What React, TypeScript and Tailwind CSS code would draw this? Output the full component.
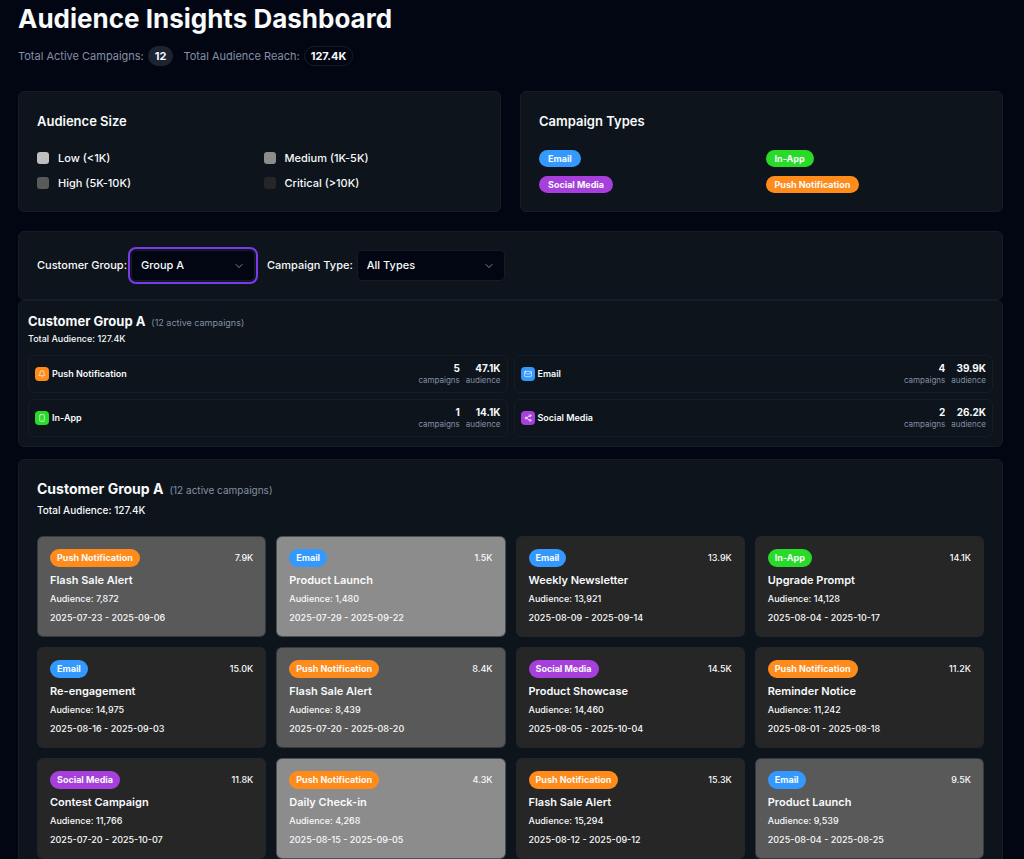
import { useState } from "react";
import { Bell, ChevronDown, Mail, Share2, Smartphone } from "lucide-react";
import type { LucideIcon } from "lucide-react";

type CampaignType = "Push Notification" | "Email" | "In-App" | "Social Media";

type Campaign = {
  type: CampaignType;
  name: string;
  audience: number;
  start: string;
  end: string;
};

const typeColors: Record<CampaignType, string> = {
  "Push Notification": "bg-[#ff8c1a]",
  Email: "bg-[#3399ff]",
  "In-App": "bg-[#29db29]",
  "Social Media": "bg-[#a63fdb]",
};

const typeIcons: Record<CampaignType, LucideIcon> = {
  "Push Notification": Bell,
  Email: Mail,
  "In-App": Smartphone,
  "Social Media": Share2,
};

const legendTypes: CampaignType[] = ["Email", "In-App", "Social Media", "Push Notification"];
const summaryTypes: CampaignType[] = ["Push Notification", "Email", "In-App", "Social Media"];

const sizes = [
  { label: "Low (<1K)", color: "bg-[#bfbfbf]" },
  { label: "Medium (1K-5K)", color: "bg-[#8c8c8c]" },
  { label: "High (5K-10K)", color: "bg-[#595959]" },
  { label: "Critical (>10K)", color: "bg-[#262626]" },
];

const campaigns: Campaign[] = [
  { type: "Push Notification", name: "Flash Sale Alert", audience: 7872, start: "2025-07-23", end: "2025-09-06" },
  { type: "Email", name: "Product Launch", audience: 1480, start: "2025-07-29", end: "2025-09-22" },
  { type: "Email", name: "Weekly Newsletter", audience: 13921, start: "2025-08-09", end: "2025-09-14" },
  { type: "In-App", name: "Upgrade Prompt", audience: 14128, start: "2025-08-04", end: "2025-10-17" },
  { type: "Email", name: "Re-engagement", audience: 14975, start: "2025-08-16", end: "2025-09-03" },
  { type: "Push Notification", name: "Flash Sale Alert", audience: 8439, start: "2025-07-20", end: "2025-08-20" },
  { type: "Social Media", name: "Product Showcase", audience: 14460, start: "2025-08-05", end: "2025-10-04" },
  { type: "Push Notification", name: "Reminder Notice", audience: 11242, start: "2025-08-01", end: "2025-08-18" },
  { type: "Social Media", name: "Contest Campaign", audience: 11766, start: "2025-07-20", end: "2025-10-07" },
  { type: "Push Notification", name: "Daily Check-in", audience: 4268, start: "2025-08-15", end: "2025-09-05" },
  { type: "Push Notification", name: "Flash Sale Alert", audience: 15294, start: "2025-08-12", end: "2025-09-12" },
  { type: "Email", name: "Product Launch", audience: 9539, start: "2025-08-04", end: "2025-08-25" },
];

const formatK = (n: number) => `${(n / 1000).toFixed(1)}K`;

const sumAudience = (list: Campaign[]) => list.reduce((sum, c) => sum + c.audience, 0);

const sizeColor = (audience: number) => {
  if (audience < 1000) return "bg-[#bfbfbf]";
  if (audience < 5000) return "bg-[#8c8c8c]";
  if (audience < 10000) return "bg-[#595959]";
  return "bg-[#262626]";
};

type FilterProps = {
  id: string;
  label: string;
  value: string;
  options: string[];
  className: string;
  onChange: (value: string) => void;
};

const Filter = ({ id, label, value, options, className, onChange }: FilterProps) => (
  <div className="flex items-center gap-1">
    <label htmlFor={id} className="text-[11px] font-medium">
      {label}
    </label>
    <div className="relative">
      <select
        id={id}
        value={value}
        onChange={(e) => onChange(e.target.value)}
        className={`h-[31px] appearance-none rounded-[5px] border border-[#151c28] bg-[#020612] px-[9px] text-[11px] font-medium ${className}`}
      >
        {options.map((option) => (
          <option key={option}>{option}</option>
        ))}
      </select>
      <ChevronDown className="pointer-events-none absolute top-[10px] right-[10px] size-3 text-[#7f8692]" />
    </div>
  </div>
);

const SummaryTile = ({ type }: { type: CampaignType }) => {
  const Icon = typeIcons[type];
  const list = campaigns.filter((c) => c.type === type);

  return (
    <div className="flex h-[38px] items-center justify-between rounded-md border border-[#151c28] px-[6px]">
      <div className="flex items-center gap-[3px]">
        <span className={`flex size-[14px] items-center justify-center rounded-[4px] ${typeColors[type]}`}>
          <Icon className="size-2 text-white" />
        </span>
        <span className="text-[9px] font-semibold">{type}</span>
      </div>
      <div className="flex gap-[6px] text-right">
        <div>
          <div className="text-[10px] leading-3 font-bold">{list.length}</div>
          <div className="text-[8px] leading-3 text-[#8390a5]">campaigns</div>
        </div>
        <div>
          <div className="text-[10px] leading-3 font-bold">{formatK(sumAudience(list))}</div>
          <div className="text-[8px] leading-3 text-[#8390a5]">audience</div>
        </div>
      </div>
    </div>
  );
};

const CampaignCard = ({ campaign }: { campaign: Campaign }) => (
  <article className={`rounded-md border border-[#1e2630]/60 p-3 pb-[10px] ${sizeColor(campaign.audience)}`}>
    <div className="flex items-center justify-between">
      <span className={`rounded-full px-[7px] text-[9px] leading-[18px] font-bold ${typeColors[campaign.type]}`}>
        {campaign.type}
      </span>
      <span className="text-[9px] leading-[18px] font-medium">{formatK(campaign.audience)}</span>
    </div>
    <h3 className="mt-[5px] text-[11px] leading-4 font-semibold">{campaign.name}</h3>
    <p className="mt-[3px] text-[9px] leading-4 font-medium">
      Audience: {campaign.audience.toLocaleString("en-US")}
    </p>
    <p className="mt-[3px] text-[9px] leading-4 font-medium">
      {campaign.start} - {campaign.end}
    </p>
  </article>
);

export default function App() {
  const [group, setGroup] = useState("Group A");
  const [type, setType] = useState("All Types");

  const total = formatK(sumAudience(campaigns));
  const visible = campaigns.filter((c) => type === "All Types" || c.type === type);

  return (
    <main className="min-h-screen bg-[#020612] pr-[21px] pb-5 pl-[18px] font-['Inter',sans-serif] text-[#f8fafc]">
      {/* Header */}
      <header>
        <h1 className="text-[26px] leading-[38px] font-bold">Audience Insights Dashboard</h1>
        <div className="mt-2 flex items-center gap-[10px] text-[11px] text-[#8390a5]">
          <div className="flex items-center gap-1">
            Total Active Campaigns:
            <span className="rounded-full bg-[#1c2431] px-[7px] leading-5 font-bold text-[#f8fafc]">
              {campaigns.length}
            </span>
          </div>
          <div className="flex items-center gap-1">
            Total Audience Reach:
            <span className="rounded-full border border-[#151c28] px-[6px] leading-[18px] font-bold text-[#f8fafc]">
              {total}
            </span>
          </div>
        </div>
      </header>

      {/* Legends */}
      <div className="mt-[25px] grid grid-cols-2 gap-[19px]">
        <section className="rounded-md border border-[#151c28] bg-[#0d141b] p-[18px]">
          <h2 className="text-[13px] leading-[22px] font-semibold">Audience Size</h2>
          <ul className="mt-[18px] grid grid-cols-2 gap-x-2 gap-y-[9px] text-[11px] leading-4 font-medium">
            {sizes.map((size) => (
              <li key={size.label} className="flex items-center gap-[9px]">
                <span className={`size-3 rounded-[3px] ${size.color}`} />
                {size.label}
              </li>
            ))}
          </ul>
        </section>
        <section className="rounded-md border border-[#151c28] bg-[#0d141b] p-[18px]">
          <h2 className="text-[13px] leading-[22px] font-semibold">Campaign Types</h2>
          <ul className="mt-[18px] grid grid-cols-2 gap-x-2 gap-y-[9px]">
            {legendTypes.map((t) => (
              <li key={t} className="flex">
                <span className={`rounded-full px-[9px] text-[9px] leading-[17px] font-bold ${typeColors[t]}`}>{t}</span>
              </li>
            ))}
          </ul>
        </section>
      </div>

      {/* Filters */}
      <section className="mt-[19px] flex items-center gap-3 rounded-md border border-[#151c28] bg-[#0d141b] p-[18px]">
        <Filter
          id="group"
          label="Customer Group:"
          value={group}
          options={["Group A", "Group B", "Group C"]}
          onChange={setGroup}
          className="w-[124px] outline-2 outline-offset-1 outline-[#7c3aed]"
        />
        <Filter
          id="type"
          label="Campaign Type:"
          value={type}
          options={["All Types", ...legendTypes]}
          onChange={setType}
          className="w-[148px] outline-none"
        />
      </section>

      {/* Group summary */}
      <section className="rounded-md border border-[#151c28] bg-[#0d141b] px-[9px] pt-[10px] pb-[9px]">
        <div className="flex items-baseline gap-[6px]">
          <h2 className="text-[13px] leading-5 font-bold">Customer {group}</h2>
          <span className="text-[9px] text-[#8390a5]">({campaigns.length} active campaigns)</span>
        </div>
        <p className="text-[9px] leading-4 font-medium">Total Audience: {total}</p>
        <div className="mt-2 grid grid-cols-2 gap-[6px]">
          {summaryTypes.map((t) => (
            <SummaryTile key={t} type={t} />
          ))}
        </div>
      </section>

      {/* Campaign list */}
      <section className="mt-3 rounded-md border border-[#151c28] bg-[#0d141b] p-[18px]">
        <div className="flex items-baseline gap-[6px]">
          <h2 className="text-[14px] leading-[22px] font-bold">Customer {group}</h2>
          <span className="text-[10px] text-[#8390a5]">({campaigns.length} active campaigns)</span>
        </div>
        <p className="mt-[2px] text-[10px] leading-4 font-medium">Total Audience: {total}</p>
        <div className="mt-[18px] grid grid-cols-4 gap-[10px]">
          {visible.map((c) => (
            <CampaignCard key={c.name + c.audience} campaign={c} />
          ))}
        </div>
      </section>
    </main>
  );
}
